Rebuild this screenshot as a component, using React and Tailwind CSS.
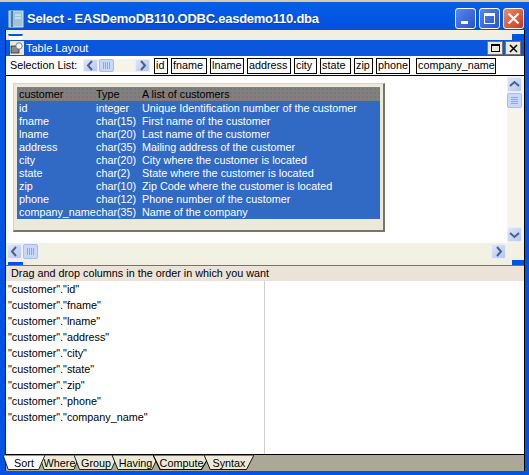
const font = { fontFamily: '"Liberation Sans", Arial, sans-serif' };

const ScrollBtn = ({ dir, short }) => {
  const pts = {
    left: "9,3 5,7.5 9,12",
    right: "6,3 10,7.5 6,12",
    up: "3,9 7.5,5 12,9",
    down: "3,6 7.5,10 12,6",
  };
  return (
    <div className={`w-[15px] ${short ? "h-[13px]" : "h-[15px]"} shrink-0 rounded-[2px] border border-[#e8eefc] bg-gradient-to-br from-[#dbe5fd] to-[#b4c7f7] flex items-center justify-center`}>
      <svg width="15" height="15" viewBox="0 0 15 15" fill="none" stroke="#4d6185" strokeWidth="2" className="shrink-0">
        <polyline points={pts[dir]} />
      </svg>
    </div>
  );
};

const Thumb = ({ vertical, short }) => (
  <div className={`w-[15px] ${short ? "h-[13px]" : "h-[15px]"} shrink-0 rounded-[2px] border border-[#a9bdf3] bg-[#c8d7fc] flex items-center justify-center`}>
    <svg width="9" height="9" viewBox="0 0 9 9" stroke="#8fa6e2" strokeWidth="1">
      {vertical ? (
        <path d="M1 1.5H8M1 3.5H8M1 5.5H8M1 7.5H8" />
      ) : (
        <path d="M1.5 1V8M3.5 1V8M5.5 1V8M7.5 1V8" />
      )}
    </svg>
  </div>
);

const columns = [
  ["id", "w-[14px]"],
  ["fname", "w-[36px]"],
  ["lname", "w-[34px]"],
  ["address", "w-[44px]"],
  ["city", "w-[23px]"],
  ["state", "w-[31px]"],
  ["zip", "w-[19px]"],
  ["phone", "w-[34px]"],
  ["company_name", "w-[80px] ml-[3px]"],
];

const rows = [
  ["id", "integer", "Unique Identification number of the customer"],
  ["fname", "char(15)", "First name of the customer"],
  ["lname", "char(20)", "Last name of the customer"],
  ["address", "char(35)", "Mailing address of the customer"],
  ["city", "char(20)", "City where the customer is located"],
  ["state", "char(2)", "State where the customer is located"],
  ["zip", "char(10)", "Zip Code where the customer is located"],
  ["phone", "char(12)", "Phone number of the customer"],
  ["company_name", "char(35)", "Name of the company"],
];

const sortCols = ["id", "fname", "lname", "address", "city", "state", "zip", "phone", "company_name"];

const tabs = [
  ["Sort", "w-[36px] z-10", "#ffffff"],
  ["Where", "w-[35px]", "#ece9d8"],
  ["Group", "w-[38px]", "#ece9d8"],
  ["Having", "w-[41px]", "#ece9d8"],
  ["Compute", "w-[51px]", "#ece9d8"],
  ["Syntax", "w-[44px]", "#ece9d8"],
];

const App = () => (
  <div className="w-[529px] h-[475px] overflow-hidden bg-[#0054e3] flex flex-col text-[10.8px] text-black" style={font}>
    {/* Title bar */}
    <div className="h-[30px] shrink-0 flex items-center pt-[5px] pl-[8px] pr-[5px] bg-gradient-to-b from-[#0a5de8] via-[#0058e6] to-[#0350d6] border-t-2 border-[#d8c9a8]">
      <svg width="16" height="18" viewBox="0 0 16 18" className="shrink-0">
        <rect x="1" y="1" width="14" height="16" fill="#9fc3d8" stroke="#cfe4ef" />
        <rect x="3" y="1" width="2" height="16" fill="#4a7ea8" />
        <path d="M7 5H13M7 8H13" stroke="#e8f2f8" />
      </svg>
      <span className="ml-[3px] text-white font-bold text-[13px] tracking-[-0.25px] whitespace-nowrap [text-shadow:1px_1px_#0f3fa8]">
        Select - EASDemoDB110.ODBC.easdemo110.dba
      </span>
      <div className="ml-auto flex gap-[3px]">
        <div className="w-[21px] h-[21px] rounded-[3px] border border-white bg-gradient-to-br from-[#5b86ea] to-[#2452cf] flex items-end pl-[5px] pb-[4px]">
          <div className="w-[7px] h-[3px] bg-white" />
        </div>
        <div className="w-[21px] h-[21px] rounded-[3px] border border-white bg-gradient-to-br from-[#5b86ea] to-[#2452cf] flex items-center justify-center">
          <div className="w-[11px] h-[11px] border border-white border-t-[3px]" />
        </div>
        <div className="w-[21px] h-[21px] rounded-[3px] border border-white bg-gradient-to-br from-[#e98a6a] to-[#c9340f] flex items-center justify-center">
          <svg width="13" height="13" viewBox="0 0 13 13" stroke="white" strokeWidth="2.2">
            <path d="M1.5 1.5L11.5 11.5M11.5 1.5L1.5 11.5" />
          </svg>
        </div>
      </div>
    </div>

    {/* Client area */}
    <div className="flex-1 min-h-0 ml-[5px] mr-[4px] mb-[4px] bg-[#ece9d8] border-l border-r border-black flex flex-col">
      {/* Sheet header */}
      <div className="h-[10px] shrink-0 flex justify-between items-end bg-[#f1eee2]">
        <div className="w-[15px] h-[6px] ml-[2px] border-t-2 border-[#0054e3] border-x border-x-[#ece9d8] bg-white" />
        <div className="w-[12px] h-[6px] bg-[#0054e3]" />
      </div>

      {/* Table Layout title */}
      <div className="h-[16px] shrink-0 flex items-center bg-[#0a56dc] pl-[4px] pr-[3px]">
        <svg width="14" height="14" viewBox="0 0 14 14" className="shrink-0 bg-[#ece9d8]">
          <rect x="1" y="5" width="8" height="7" fill="#8a8a8a" stroke="#222" strokeWidth="0.7" />
          <circle cx="9" cy="5" r="3.2" fill="#f4f4f4" stroke="#555" strokeWidth="0.7" />
        </svg>
        <span className="ml-[2px] text-white text-[11px]">Table Layout</span>
        <div className="ml-auto flex gap-[2px]">
          <div className="w-[16px] h-[14px] bg-[#ece9d8] border border-[#777] flex items-center justify-center">
            <div className="w-[9px] h-[8px] border border-black border-t-2" />
          </div>
          <div className="w-[16px] h-[14px] bg-[#ece9d8] border border-[#777] flex items-center justify-center">
            <svg width="9" height="9" viewBox="0 0 9 9" stroke="black" strokeWidth="1.6">
              <path d="M1 1L8 8M8 1L1 8" />
            </svg>
          </div>
        </div>
      </div>

      {/* Selection list */}
      <div className="h-[20px] shrink-0 bg-white flex items-center pl-[4px] border-b border-black">
        <span className="w-[73px] shrink-0 whitespace-nowrap">Selection List:</span>
        <div className="w-[67px] h-[13px] shrink-0 flex items-center bg-[#f5f3ea]">
          <ScrollBtn dir="left" short />
          <div className="ml-[1px]"><Thumb short /></div>
          <div className="ml-auto"><ScrollBtn dir="right" short /></div>
        </div>
        <div className="flex gap-[3px] ml-[4px]">
          {columns.map(([c, w]) => (
            <div key={c} className={`${w} h-[16px] shrink-0 border border-black flex items-center pl-[1px] leading-none whitespace-nowrap overflow-hidden`}>
              {c}
            </div>
          ))}
        </div>
      </div>

      {/* Table canvas */}
      <div className="h-[167px] shrink-0 bg-white flex">
        <div className="flex-1 min-w-0 pt-[7px] pl-[7px]">
          <div className="w-[372px] h-[149px] bg-[#ece9d8] border border-[#d8d4c4] border-r-2 border-b-2 border-r-[#77756a] border-b-[#77756a] p-[3px] pb-0">
            <div className="h-[14px] bg-[#808080] bg-[radial-gradient(#787878_1px,transparent_1px)] bg-[length:4px_4px] flex items-center px-[2px]">
              <span className="w-[77px]">customer</span>
              <span className="w-[46px]">Type</span>
              <span>A list of customers</span>
            </div>
            <div className="bg-[#316ac5] text-white pt-[1px]">
              {rows.map(([name, type, desc]) => (
                <div key={name} className="h-[13px] flex items-center px-[2px] whitespace-nowrap leading-none">
                  <span className="w-[77px] shrink-0">{name}</span>
                  <span className="w-[46px] shrink-0">{type}</span>
                  <span>{desc}</span>
                </div>
              ))}
            </div>
          </div>
        </div>
        <div className="w-[17px] shrink-0 bg-[#f5f3ea] flex flex-col py-[1px] gap-[1px]">
          <ScrollBtn dir="up" />
          <Thumb vertical />
          <div className="mt-auto"><ScrollBtn dir="down" /></div>
        </div>
      </div>

      {/* Horizontal scroll */}
      <div className="h-[16px] shrink-0 bg-[#f3f0e4] flex items-center pl-[1px] pr-[18px] gap-[1px]">
        <ScrollBtn dir="left" />
        <Thumb />
        <div className="ml-auto"><ScrollBtn dir="right" /></div>
      </div>

      {/* Splitter */}
      <div className="h-[7px] shrink-0 flex items-end bg-[#f1eee2] border-b border-[#77756a]">
        <div className="w-[15px] h-[3px] ml-[2px] bg-[#0054e3]" />
        <div className="ml-auto w-[12px] h-[5px] bg-[#0054e3]" />
      </div>

      {/* Sort pane */}
      <div className="h-[15px] shrink-0 bg-[#ece3d8] flex items-center pl-[5px] whitespace-nowrap">
        Drag and drop columns in the order in which you want
      </div>
      <div className="flex-1 min-h-0 bg-white flex">
        <div className="w-[259px] shrink-0 pl-[2px] border-r border-[#cfcfcf]">
          {sortCols.map((c) => (
            <div key={c} className="h-[16px] flex items-center whitespace-nowrap">
              "customer"."{c}"
            </div>
          ))}
        </div>
        <div className="flex-1" />
      </div>

      {/* Tabs */}
      <div className="h-[17px] shrink-0 bg-[#aca899] border-t border-black flex">
        {tabs.map(([label, w, fill]) => (
          <div key={label} className={`${w} h-[15px] relative flex items-center justify-center`}>
            <svg className="absolute -left-[3px] top-0 w-[calc(100%+6px)] h-full" viewBox="0 0 40 15" preserveAspectRatio="none">
              <polygon points="0,0 5,14.5 34,14.5 40,0" fill={fill} stroke="black" strokeWidth="0.8" />
            </svg>
            <span className="relative leading-none pt-[1px]">{label}</span>
          </div>
        ))}
      </div>
    </div>
  </div>
);

export default App;
